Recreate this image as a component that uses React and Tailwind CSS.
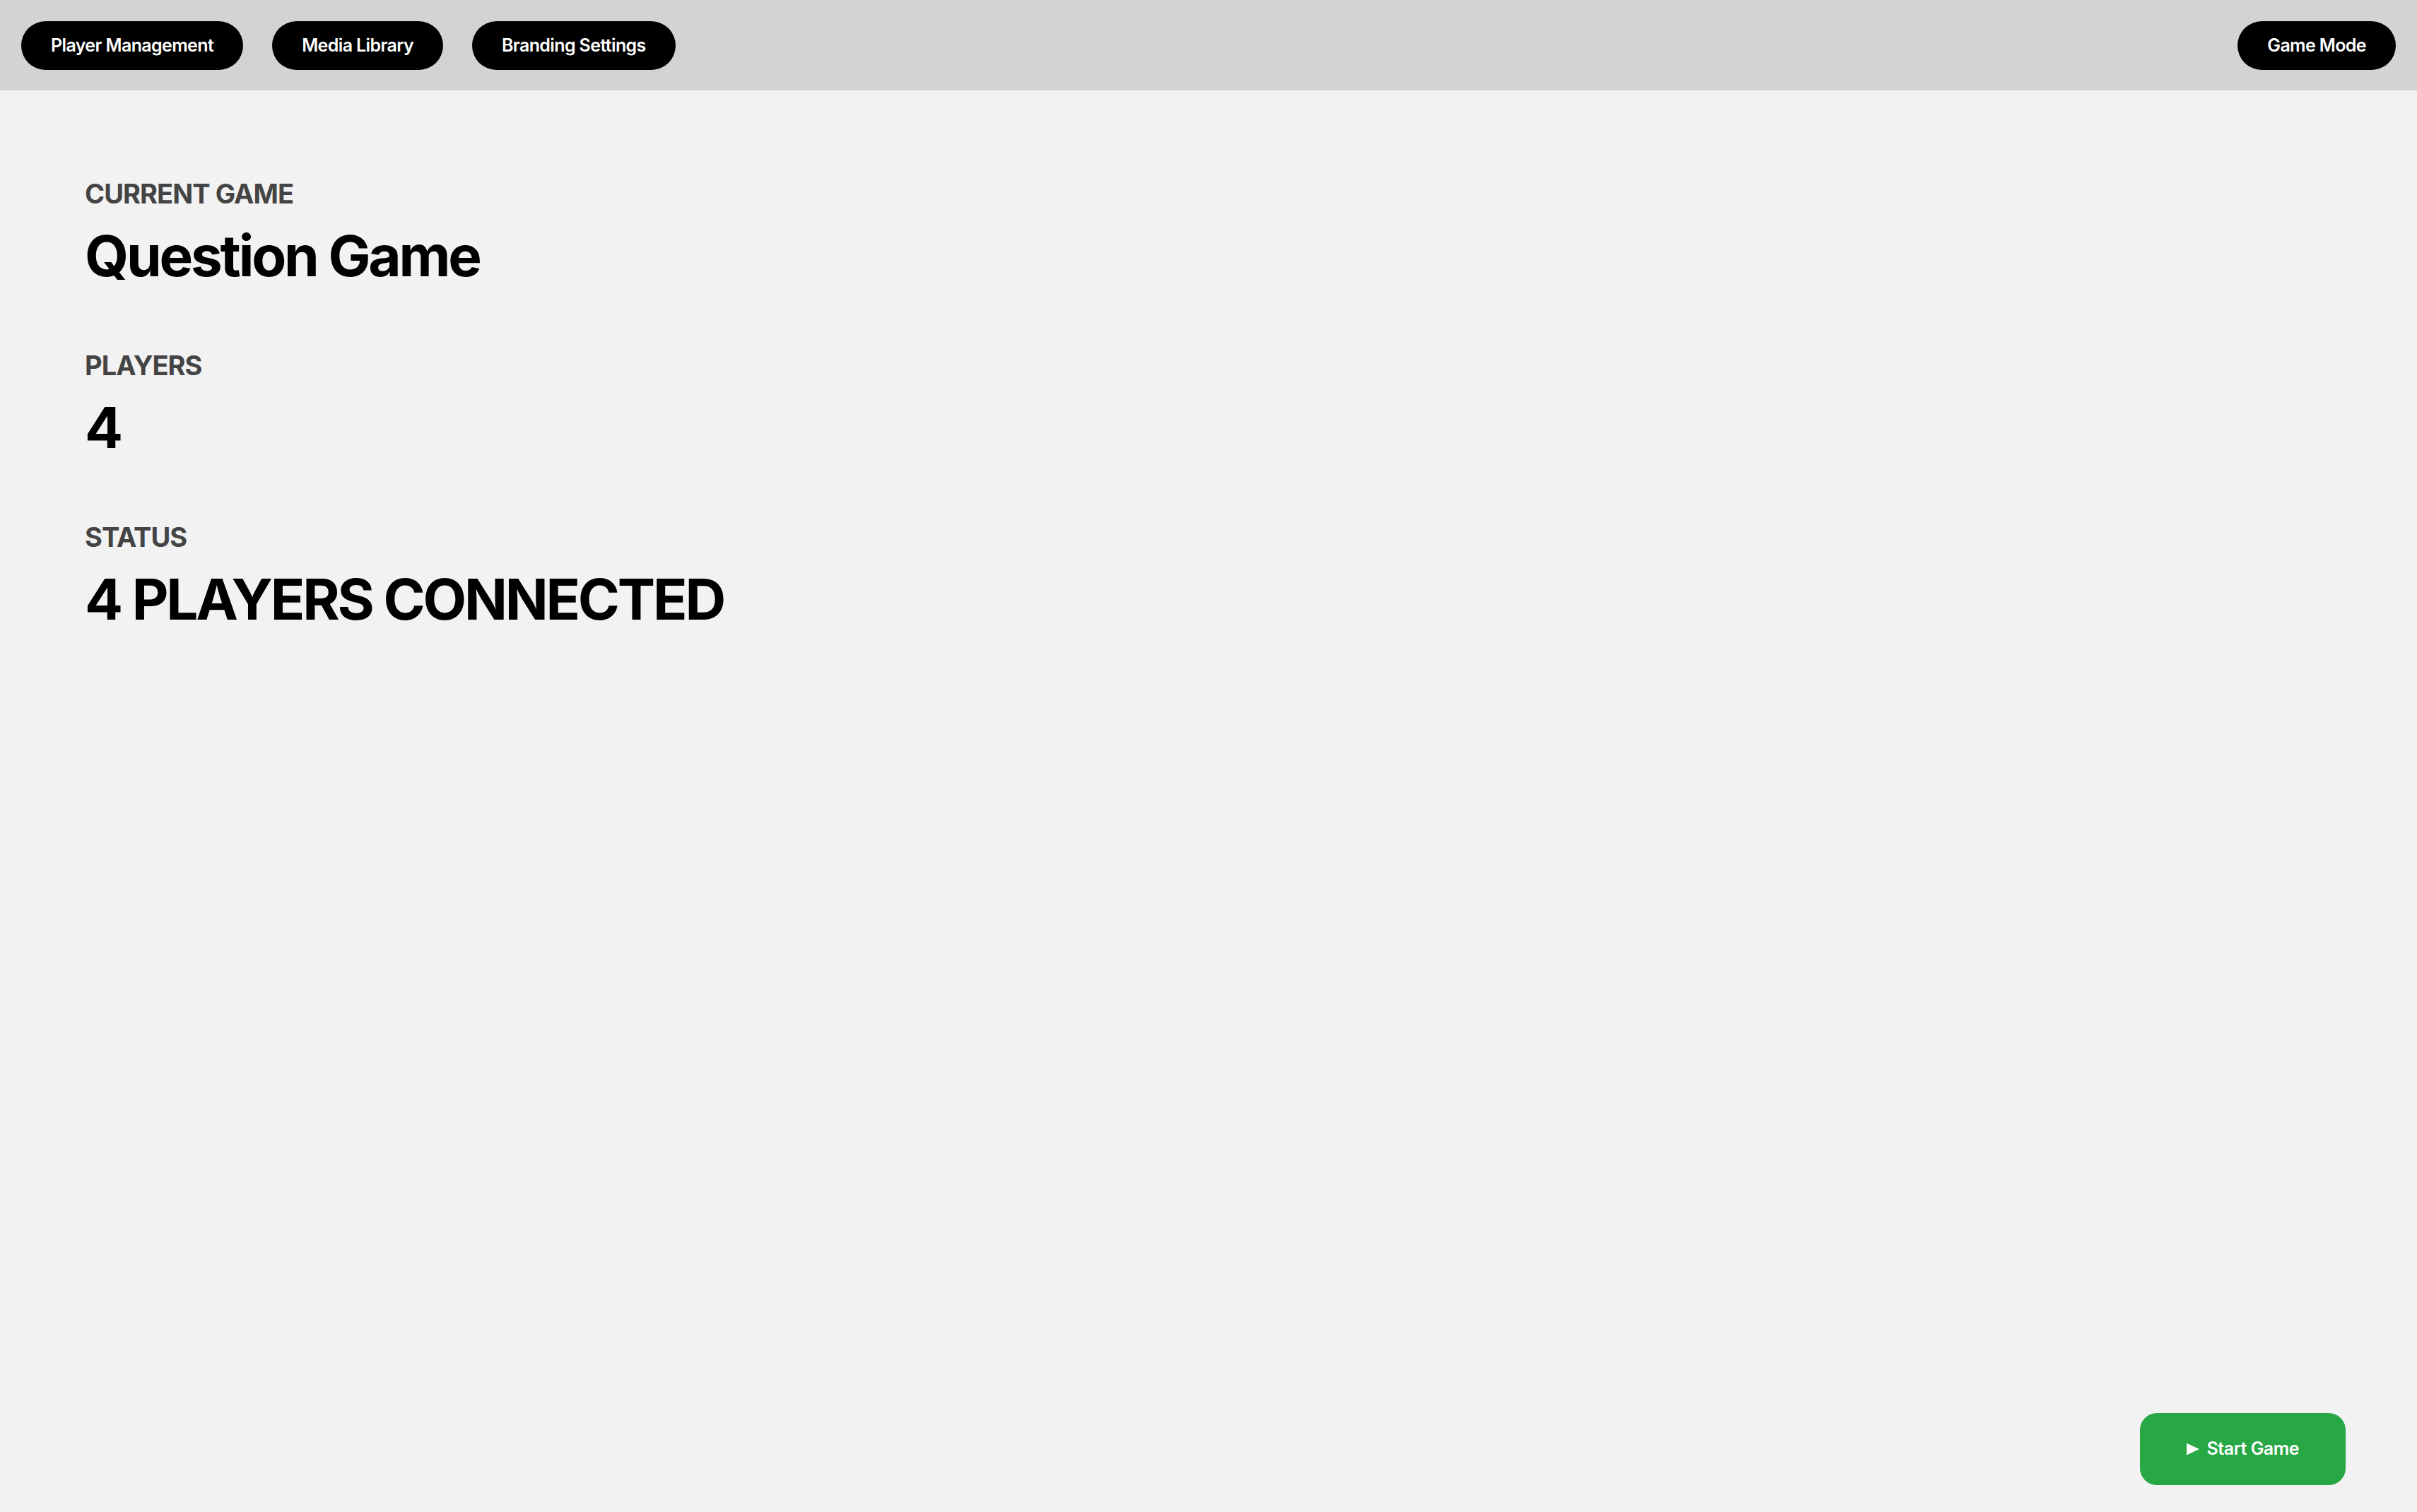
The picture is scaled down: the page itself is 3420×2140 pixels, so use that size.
import { useState } from "react";

const navItems = ["Player Management", "Media Library", "Branding Settings"];

function NavButton({ children }) {
  return (
    <button
      type="button"
      className="h-[69px] px-[42px] pt-[2px] rounded-full bg-black text-white text-[25px] font-semibold tracking-[-0.025em] whitespace-nowrap"
    >
      {children}
    </button>
  );
}

function Stat({ label, value }) {
  return (
    <div className="flex flex-col">
      <span className="text-[38px] leading-[46px] font-bold tracking-[-0.025em] text-[#444444] uppercase">
        {label}
      </span>
      <span className="mt-[17px] text-[80px] leading-[96px] font-bold tracking-[-0.04em] text-black">
        {value}
      </span>
    </div>
  );
}

export default function App() {
  const [players] = useState(4);

  return (
    <div
      className="min-h-screen bg-[#f2f2f2]"
      style={{ fontFamily: "Inter, 'Noto Sans', sans-serif" }}
    >
      {/* Top bar */}
      <header className="h-[128px] bg-[#d3d3d3] px-[30px] flex items-center justify-between">
        <nav className="flex items-center gap-[41px]">
          {navItems.map((item) => (
            <NavButton key={item}>{item}</NavButton>
          ))}
        </nav>
        <NavButton>Game Mode</NavButton>
      </header>

      {/* Game overview */}
      <main className="px-[120px] pt-[123px] flex flex-col gap-[84px]">
        <Stat label="Current Game" value="Question Game" />
        <Stat label="Players" value={players} />
        <Stat label="Status" value={`${players} PLAYERS CONNECTED`} />
      </main>

      <button
        type="button"
        className="fixed right-[101px] bottom-[38px] h-[102px] px-[66px] rounded-[24px] bg-[#28a745] text-white text-[25px] font-semibold tracking-[-0.02em] flex items-center gap-[11px]"
      >
        <svg width="18" height="18" viewBox="0 0 18 18" fill="currentColor">
          <path d="M0 0.5 L18 9 L0 17.5 Z" />
        </svg>
        Start Game
      </button>
    </div>
  );
}
